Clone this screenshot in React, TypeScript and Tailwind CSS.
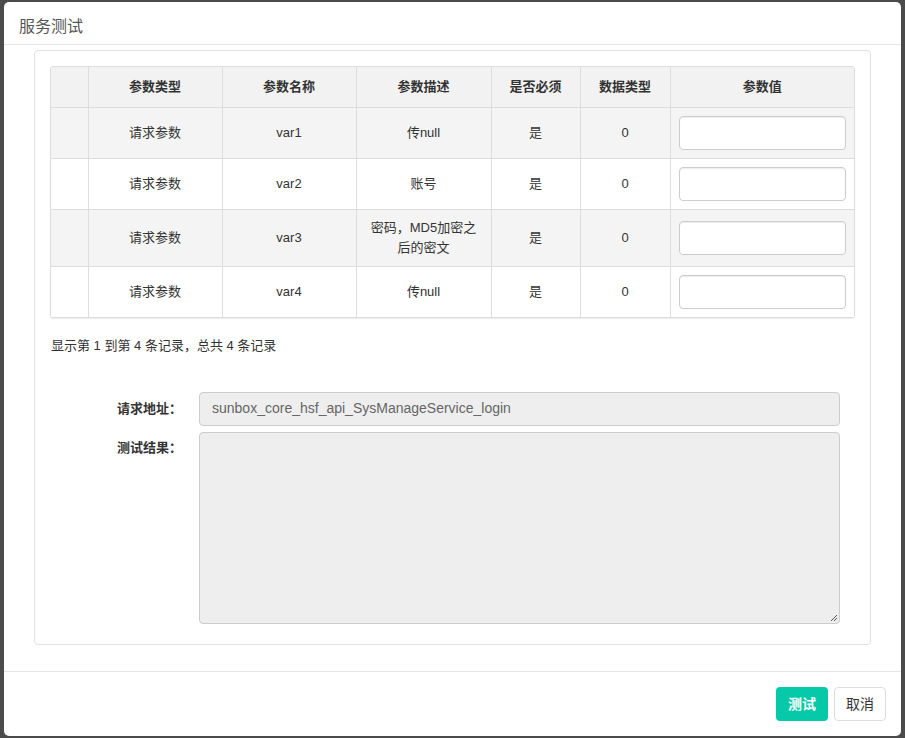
import React from "react";

const rows = [
  { type: "请求参数", name: "var1", desc: <>传null</>, req: "是", dt: "0", striped: true },
  { type: "请求参数", name: "var2", desc: <>账号</>, req: "是", dt: "0", striped: false },
  { type: "请求参数", name: "var3", desc: <>密码，MD5加密之<br />后的密文</>, req: "是", dt: "0", striped: true },
  { type: "请求参数", name: "var4", desc: <>传null</>, req: "是", dt: "0", striped: false },
];

const font = { fontFamily: '"Liberation Sans", "Noto Sans CJK SC", sans-serif' };

export default function App() {
  return (
    <div className="w-[905px] h-[738px] bg-[#4b4b4b] pl-[4px] pt-[2px] overflow-hidden" style={font}>
      <div className="w-[897px] h-[734px] bg-white rounded-[5px] flex flex-col">
        <div className="h-[43px] border-b border-[#e5e5e5] flex items-center pl-[15px] pt-[8px]">
          <span className="text-[16px] text-[#555]">服务测试</span>
        </div>
        <div className="flex-1 px-[30px] pt-[5px]">
          <div className="border border-[#e2e2e2] rounded-[4px] p-[15px] h-[595px]">
            <div className="border border-[#dddddd] rounded-[3px] shadow-[0_1px_1px_rgba(0,0,0,0.08)] overflow-hidden">
              <table className="w-full table-fixed border-collapse text-[13px] leading-[20px] text-[#333]">
                <colgroup>
                  <col className="w-[37px]" />
                  <col className="w-[134px]" />
                  <col className="w-[134px]" />
                  <col className="w-[135px]" />
                  <col className="w-[89px]" />
                  <col className="w-[90px]" />
                  <col />
                </colgroup>
                <thead>
                  <tr className="bg-[#f2f2f2] h-[40px]">
                    <th className="border-r border-[#dddddd]"></th>
                    <th className="border-r border-[#dddddd] font-bold">参数类型</th>
                    <th className="border-r border-[#dddddd] font-bold">参数名称</th>
                    <th className="border-r border-[#dddddd] font-bold">参数描述</th>
                    <th className="border-r border-[#dddddd] font-bold">是否必须</th>
                    <th className="border-r border-[#dddddd] font-bold">数据类型</th>
                    <th className="font-bold">参数值</th>
                  </tr>
                </thead>
                <tbody>
                  {rows.map((r, i) => (
                    <tr key={i} className={r.striped ? "bg-[#f4f4f4]" : "bg-white"}>
                      <td className="border-t border-r border-[#dddddd]"></td>
                      <td className="border-t border-r border-[#dddddd] text-center p-[8px]">{r.type}</td>
                      <td className="border-t border-r border-[#dddddd] text-center p-[8px]">{r.name}</td>
                      <td className="border-t border-r border-[#dddddd] text-center p-[8px]">{r.desc}</td>
                      <td className="border-t border-r border-[#dddddd] text-center p-[8px]">{r.req}</td>
                      <td className="border-t border-r border-[#dddddd] text-center p-[8px]">{r.dt}</td>
                      <td className="border-t border-[#dddddd] p-[8px]">
                        <input className="block w-full h-[34px] bg-white border border-[#cccccc] rounded-[4px] shadow-[inset_0_1px_1px_rgba(0,0,0,0.075)] px-3 outline-none" />
                      </td>
                    </tr>
                  ))}
                </tbody>
              </table>
            </div>
            <div className="mt-[18px] text-[13px] leading-[20px] text-[#333] pl-[1px]">
              显示第 1 到第 4 条记录，总共 4 条记录
            </div>
            <div className="mt-[36px] flex flex-col gap-[6px] pr-[15px]">
              <div className="flex items-center">
                <label className="w-[132px] text-right text-[13px] font-bold text-[#333]">请求地址：</label>
                <div className="ml-[17px] flex-1 h-[34px] bg-[#eeeeee] border border-[#cccccc] rounded-[4px] flex items-center px-[12px] text-[14px] text-[#666]">
                  sunbox_core_hsf_api_SysManageService_login
                </div>
              </div>
              <div className="flex items-start">
                <label className="w-[132px] text-right text-[13px] font-bold text-[#333] pt-[6px]">测试结果：</label>
                <div className="ml-[17px] flex-1 h-[192px] bg-[#eeeeee] border border-[#cccccc] rounded-[4px] relative">
                  <svg className="absolute right-[1px] bottom-[1px]" width="8" height="8" viewBox="0 0 8 8">
                    <path d="M1 7 L7 1 M4 7 L7 4" stroke="#555" strokeWidth="1" />
                  </svg>
                </div>
              </div>
            </div>
          </div>
        </div>
        <div className="h-[65px] border-t border-[#e5e5e5] flex items-start justify-end pt-[15px] pr-[15px] gap-[6px]">
          <button className="h-[34px] px-[12px] rounded-[4px] bg-[#05c9a8] text-white text-[14px] font-bold">测试</button>
          <button className="h-[34px] px-[11px] rounded-[4px] bg-white border border-[#dddddd] text-[#333] text-[14px]">取消</button>
        </div>
      </div>
    </div>
  );
}
